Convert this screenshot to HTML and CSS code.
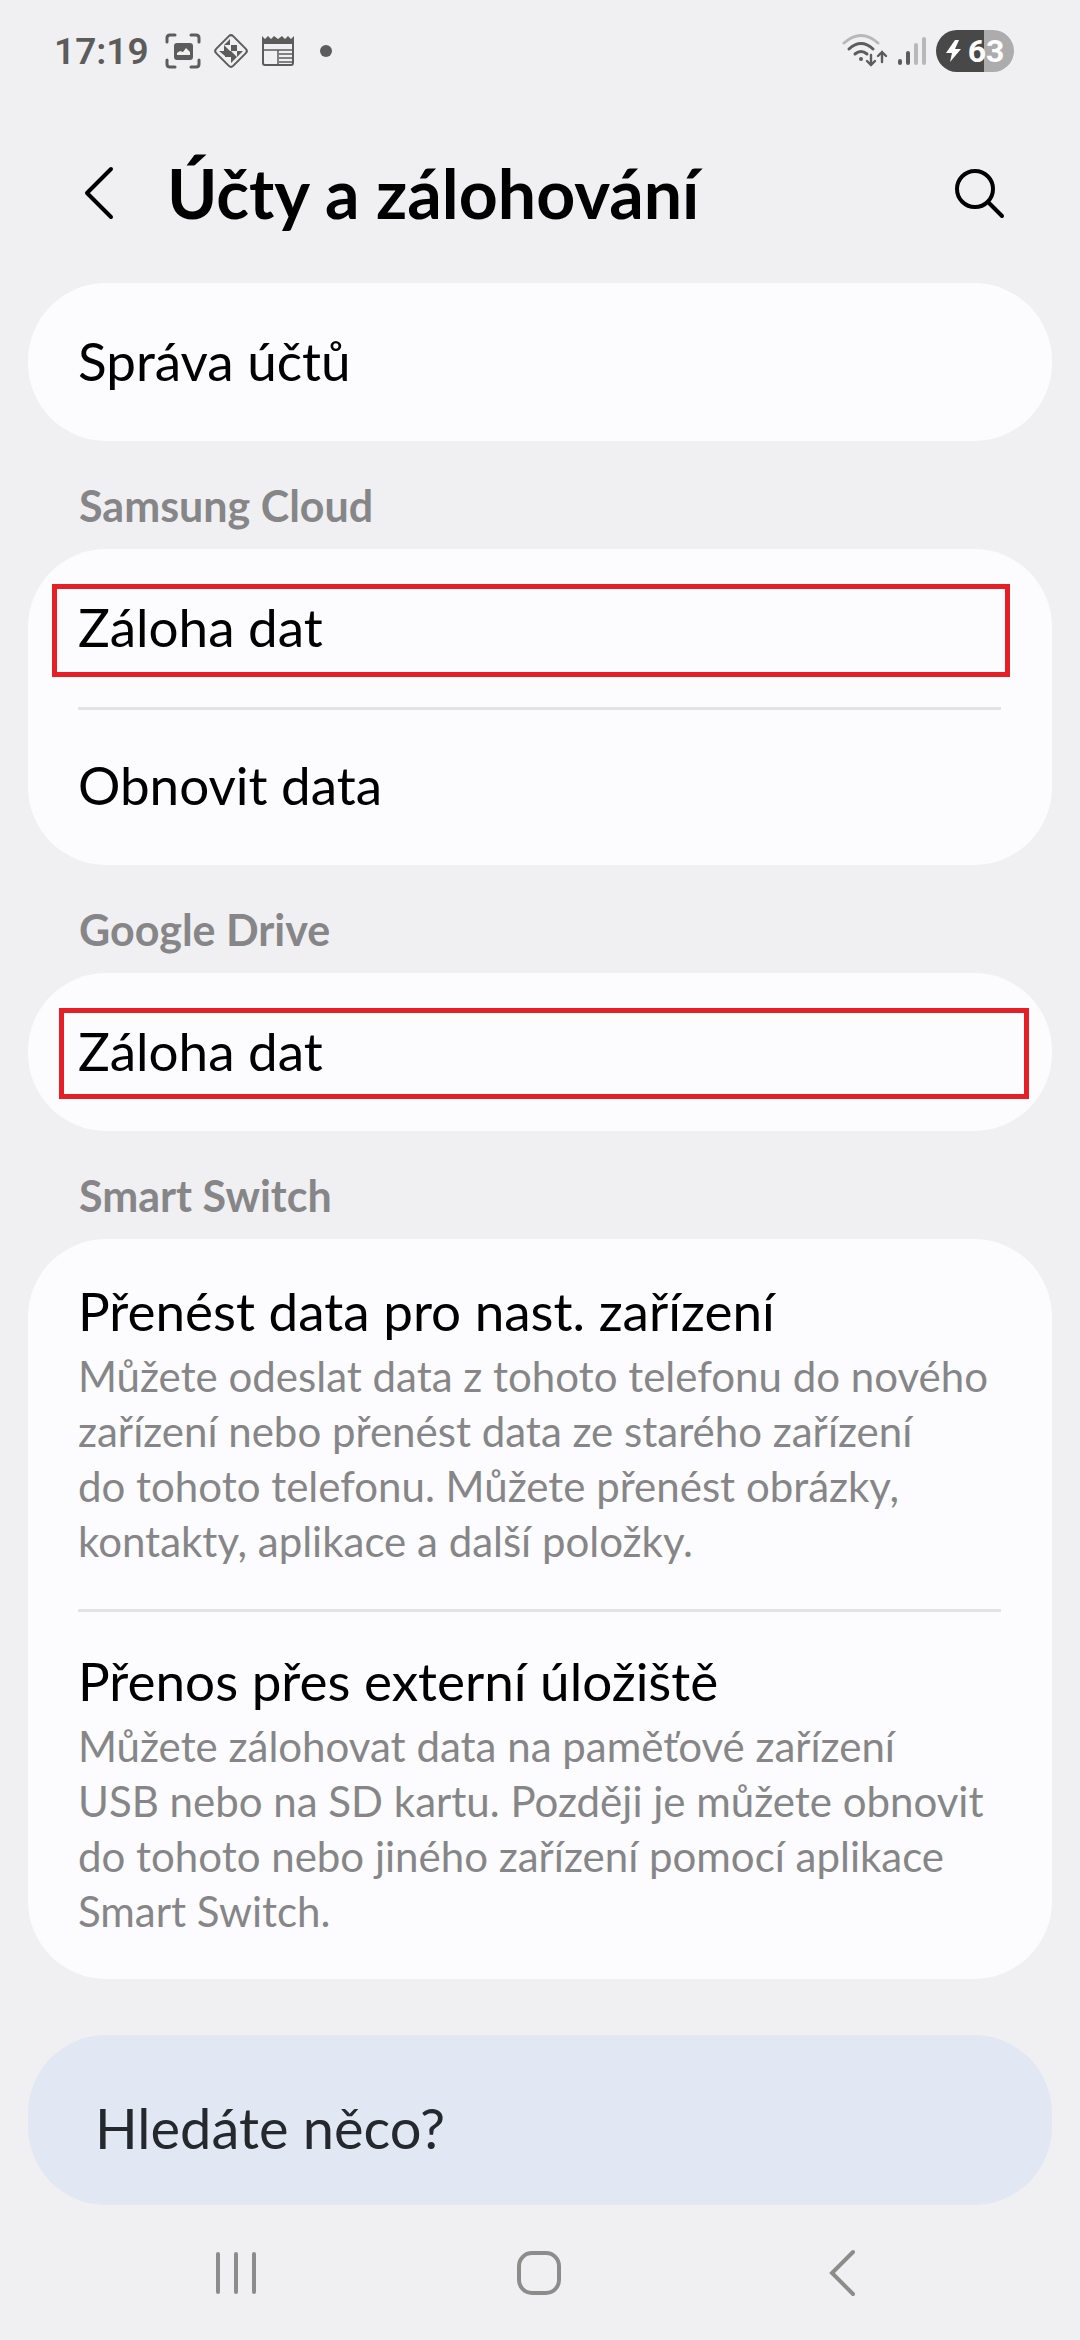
FILE: index.html
```html
<!DOCTYPE html>
<html lang="cs">

<head>
    <meta charset="UTF-8">
    <meta name="viewport" content="width=device-width, initial-scale=1.0">
    <title>Účty a zálohování</title>
    <link rel="stylesheet" href="styles.css">
</head>

<body>

    <!-- Status bar -->
    <div class="status-bar">
        <span class="time">17:19</span>
        <div class="notifications">
            <!-- screenshot -->
            <svg width="36" height="36" viewBox="0 0 36 36" fill="none" stroke="#5c5c5c" stroke-width="3" stroke-linecap="round">
                <path d="M2 9V5q0-3 3-3h5M26 2h5q3 0 3 3v4M34 27v4q0 3-3 3h-5M10 34H5q-3 0-3-3v-4" />
                <rect x="9" y="10" width="19" height="17" rx="3" fill="#5c5c5c" stroke="none" />
                <path d="M12 22v-2l3-2 3 1 3-4 4 4v3z" fill="#f0f0f2" stroke="none" />
            </svg>
            <!-- diamond -->
            <svg width="38" height="38" viewBox="0 0 38 38" fill="none" stroke="#5c5c5c" stroke-width="2">
                <rect x="7" y="7" width="24" height="24" rx="3" transform="rotate(45 19 19)" />
                <path d="M18 7v6h-6zM12 13l6 6h-6zM19 13h6l-6 6zM25 13v6h-6zM7 19h6v5zM13 19h6l-6 6zM19 19v6h-6zM19 19l6 6h-6zM25 19h6l-6 6zM19 25h6l-6 6z" fill="#5c5c5c" stroke="none" />
            </svg>
            <!-- news -->
            <svg width="34" height="32" viewBox="0 0 34 32" fill="none" stroke="#5c5c5c" stroke-width="2">
                <path d="M1 1l3 3 3-3 3 3 3-3 4 3 4-3 3 3 3-3 3 3 3-3v8H1z" fill="#5c5c5c" stroke="none" />
                <path d="M2 8v20q0 2 2 2h26q2 0 2-2V8" />
                <path d="M2 15h30M17 15v15M18 19h14M18 23h14M18 27h14" stroke-width="1.5" />
            </svg>
            <span class="dot"></span>
        </div>
        <div class="indicators">
            <!-- wifi -->
            <svg width="46" height="36" viewBox="0 0 46 36" fill="none" stroke="#5c5c5c" stroke-width="3" stroke-linecap="round">
                <path d="M2 10q17-15 34 0" stroke="#b8b8ba" />
                <path d="M7 16q12-11 24 0M13 21q6-5 12 0" />
                <circle cx="19" cy="26" r="2" fill="#5c5c5c" stroke="none" />
                <path d="M29 22v10M25 28l4 4 4-4M40 29V19M36 23l4-4 4 4" stroke-width="2.4" />
            </svg>
            <!-- mobile signal -->
            <svg width="28" height="30" viewBox="0 0 28 30" stroke-width="4" stroke-linecap="round">
                <path d="M2 25v2M10 17v10" stroke="#5c5c5c" />
                <path d="M18 9v18M26 3v24" stroke="#b8b8ba" />
            </svg>
            <div class="battery">
                <svg width="16" height="22" viewBox="0 0 16 22" fill="#fff">
                    <path d="M9 0L0 13h6L4 22l11-13H9l4-9z" />
                </svg>
                <span>63</span>
            </div>
        </div>
    </div>

    <!-- Header -->
    <header class="app-bar">
        <button class="icon-btn back-btn" aria-label="Zpět">
            <svg width="32" height="56" viewBox="0 0 32 56" fill="none" stroke="#000" stroke-width="4" stroke-linecap="round" stroke-linejoin="round">
                <path d="M28 4L4 28l24 24" />
            </svg>
        </button>
        <h1>Účty a zálohování</h1>
        <button class="icon-btn" aria-label="Hledat">
            <svg width="52" height="52" viewBox="0 0 52 52" fill="none" stroke="#000" stroke-width="4" stroke-linecap="round">
                <circle cx="22" cy="22" r="18" />
                <path d="M35 35l14 14" />
            </svg>
        </button>
    </header>

    <main>
        <ul class="card">
            <li><a href="#">Správa účtů</a></li>
        </ul>

        <!-- Samsung Cloud -->
        <h2>Samsung Cloud</h2>
        <ul class="card">
            <li class="marked"><a href="#">Záloha dat</a></li>
            <li><a href="#">Obnovit data</a></li>
        </ul>

        <!-- Google Drive -->
        <h2>Google Drive</h2>
        <ul class="card">
            <li class="marked marked-wide"><a href="#">Záloha dat</a></li>
        </ul>

        <!-- Smart Switch -->
        <h2>Smart Switch</h2>
        <ul class="card detailed">
            <li>
                <a href="#">Přenést data pro nast. zařízení</a>
                <p>Můžete odeslat data z tohoto telefonu do nového zařízení nebo přenést data ze starého zařízení do&nbsp;tohoto telefonu. Můžete přenést obrázky, kontakty, aplikace a další položky.</p>
            </li>
            <li>
                <a href="#">Přenos přes externí úložiště</a>
                <p>Můžete zálohovat data na paměťové zařízení USB&nbsp;nebo na SD kartu. Později je můžete obnovit do&nbsp;tohoto nebo jiného zařízení pomocí aplikace Smart Switch.</p>
            </li>
        </ul>

        <section class="hint">
            <h3>Hledáte něco?</h3>
        </section>
    </main>

    <!-- Navigation bar -->
    <nav class="nav-bar">
        <button class="icon-btn" aria-label="Poslední aplikace">
            <svg width="46" height="46" viewBox="0 0 46 46" stroke="#8c8c8c" stroke-width="4" stroke-linecap="round">
                <path d="M5 4v38M23 4v38M41 4v38" />
            </svg>
        </button>
        <button class="icon-btn" aria-label="Domů">
            <svg width="46" height="46" viewBox="0 0 46 46" fill="none" stroke="#8c8c8c" stroke-width="4">
                <rect x="3" y="3" width="40" height="40" rx="13" />
            </svg>
        </button>
        <button class="icon-btn" aria-label="Zpět">
            <svg width="26" height="48" viewBox="0 0 26 48" fill="none" stroke="#8c8c8c" stroke-width="4" stroke-linecap="round">
                <path d="M24 3L3 24l21 21" />
            </svg>
        </button>
    </nav>

</body>

</html>
```
FILE: styles.css
```css
* {
    box-sizing: border-box;
    margin: 0;
    padding: 0;
}

body {
    min-height: 100vh;
    display: flex;
    flex-direction: column;
    font-family: Lato, Roboto, sans-serif;
    background-color: #f0f0f2;
    color: #000;
}

svg {
    display: block;
}

a {
    color: inherit;
    text-decoration: none;
}

.icon-btn {
    display: flex;
    align-items: center;
    justify-content: center;
    background: none;
    border: none;
    cursor: pointer;
}

/* Status bar */

.status-bar {
    display: flex;
    align-items: center;
    height: 102px;
    padding: 0 66px 0 54px;
}

.time {
    font-family: Roboto, sans-serif;
    font-size: 37px;
    font-weight: 600;
    color: #5c5c5c;
}

.notifications {
    display: flex;
    align-items: center;
    gap: 11px;
    margin-left: 16px;
}

.dot {
    width: 12px;
    height: 12px;
    margin-left: 14px;
    border-radius: 50%;
    background-color: #5c5c5c;
}

.indicators {
    display: flex;
    align-items: center;
    gap: 10px;
    margin-left: auto;
}

.battery {
    display: flex;
    align-items: center;
    justify-content: center;
    gap: 6px;
    width: 78px;
    height: 42px;
    border-radius: 21px;
    background: linear-gradient(to right, #484848 48px, #acacac 48px);
    font-family: Roboto, sans-serif;
    font-size: 32px;
    font-weight: 700;
    color: #fff;
}

/* Header */

.app-bar {
    display: flex;
    align-items: center;
    height: 181px;
    padding: 0 75px 0 83px;
}

.app-bar h1 {
    flex: 1;
    font-size: 68px;
    font-weight: 700;
    line-height: 84px;
}

.back-btn {
    margin-right: 52px;
}

/* Settings list */

main {
    padding: 0 28px;
}

h2 {
    padding: 39px 51px 17px;
    font-size: 43px;
    font-weight: 700;
    line-height: 52px;
    color: #868688;
}

.card {
    padding: 0 51px 0 50px;
    border-radius: 78px;
    background-color: #fcfcfe;
    list-style: none;
}

.card li {
    position: relative;
    padding: 48px 0 50px;
    font-size: 53px;
    line-height: 60px;
}

.card li + li {
    border-top: 3px solid #e3e3e5;
    padding-top: 45px;
}

.card a {
    display: block;
}

.detailed li {
    padding: 42px 0 40px;
}

.detailed li + li {
    padding-top: 39px;
}

.card p {
    margin-top: 8px;
    font-size: 42px;
    line-height: 55px;
    color: #868688;
}

/* Red frame drawn over a highlighted row */

.marked::after {
    content: "";
    position: absolute;
    top: 35px;
    bottom: 30px;
    left: -26px;
    right: -9px;
    border: 5px solid #e61e25;
}

.marked-wide::after {
    bottom: 32px;
    left: -19px;
    right: -28px;
}

.hint {
    margin-top: 56px;
    padding: 58px 67px 42px;
    border-radius: 78px;
    background-color: #e1e7f3;
}

.hint h3 {
    font-size: 56px;
    font-weight: 400;
    line-height: 70px;
    color: #25282c;
}

/* Navigation bar */

.nav-bar {
    flex: 1;
    display: grid;
    grid-template-columns: repeat(3, 1fr);
    min-height: 135px;
    padding: 0 87px 0 85px;
}
```
